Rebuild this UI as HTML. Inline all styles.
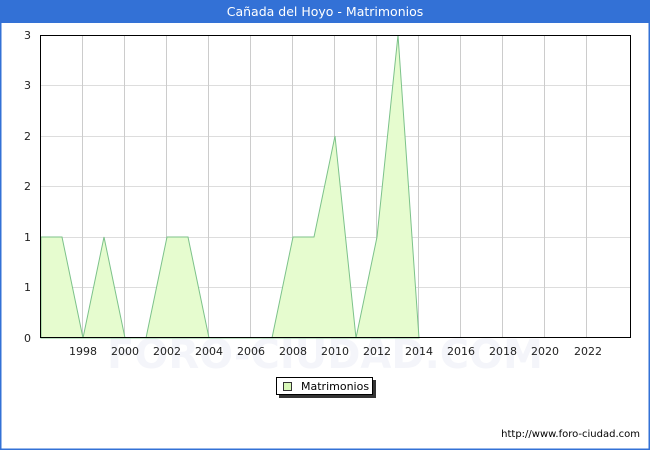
<!DOCTYPE html>
<html><head><style>
body{margin:0;width:650px;height:450px;overflow:hidden;background:#fff;font-family:"DejaVu Sans","Liberation Sans",sans-serif;}
</style></head><body>
<svg width="650" height="450" xmlns="http://www.w3.org/2000/svg" font-family="DejaVu Sans, Liberation Sans, sans-serif">
<rect x="0" y="0" width="650" height="450" fill="#fff"/>
<rect x="0.5" y="0.5" width="649" height="449" fill="none" stroke="#3371d6" stroke-width="2"/>
<rect x="0" y="0" width="650" height="23" fill="#3371d6"/>
<text x="325" y="16" text-anchor="middle" fill="#fff" font-size="12.5">Cañada del Hoyo - Matrimonios</text>
<g stroke="#ddd" stroke-width="1">
<line x1="40" y1="85.5" x2="630" y2="85.5"/><line x1="40" y1="136.5" x2="630" y2="136.5"/>
<line x1="40" y1="186.5" x2="630" y2="186.5"/><line x1="40" y1="237.5" x2="630" y2="237.5"/>
<line x1="40" y1="287.5" x2="630" y2="287.5"/>
</g>
<g stroke="#ccc" stroke-width="1">
<line x1="82.5" y1="35" x2="82.5" y2="338"/><line x1="124.5" y1="35" x2="124.5" y2="338"/>
<line x1="166.5" y1="35" x2="166.5" y2="338"/><line x1="208.5" y1="35" x2="208.5" y2="338"/>
<line x1="250.5" y1="35" x2="250.5" y2="338"/><line x1="292.5" y1="35" x2="292.5" y2="338"/>
<line x1="334.5" y1="35" x2="334.5" y2="338"/><line x1="376.5" y1="35" x2="376.5" y2="338"/>
<line x1="418.5" y1="35" x2="418.5" y2="338"/><line x1="460.5" y1="35" x2="460.5" y2="338"/>
<line x1="502.5" y1="35" x2="502.5" y2="338"/><line x1="544.5" y1="35" x2="544.5" y2="338"/>
<line x1="586.5" y1="35" x2="586.5" y2="338"/>
</g>
<text x="325" y="368" text-anchor="middle" font-size="40" fill="#f4f5fa" font-weight="bold">FORO-CIUDAD.COM</text>
<polygon points="41,338 41,237 62,237 83,338 104,237 125,338 146,338 167,237 188,237 209,338 272,338 293,237 314,237 335,136 356,338 377,237 398,35 419,338" fill="#e6fccf" stroke="#7cc28a" stroke-width="1"/>
<rect x="40.5" y="35.5" width="590" height="302" fill="none" stroke="#000" stroke-width="1"/>
<g font-size="11" fill="#222" text-anchor="end">
<text x="31" y="39">3</text><text x="31" y="89">3</text><text x="31" y="140">2</text>
<text x="31" y="190">2</text><text x="31" y="241">1</text><text x="31" y="291">1</text><text x="31" y="342">0</text>
</g>
<g font-size="11" fill="#222" text-anchor="middle">
<text x="83" y="355">1998</text><text x="125" y="355">2000</text><text x="167" y="355">2002</text>
<text x="209" y="355">2004</text><text x="251" y="355">2006</text><text x="293" y="355">2008</text>
<text x="335" y="355">2010</text><text x="377" y="355">2012</text><text x="419" y="355">2014</text>
<text x="461" y="355">2016</text><text x="503" y="355">2018</text><text x="545" y="355">2020</text>
<text x="588" y="355">2022</text>
</g>
<rect x="279" y="380" width="97" height="18" fill="#333"/>
<rect x="276.5" y="377.5" width="96" height="17" fill="#fff" stroke="#000"/>
<rect x="283.5" y="382.5" width="8" height="8" fill="#d8f8b8" stroke="#333"/>
<text x="301" y="390" font-size="11" fill="#000">Matrimonios</text>
<text x="640" y="437" text-anchor="end" font-size="10" fill="#000">http://www.foro-ciudad.com</text>
</svg>
</body></html>
